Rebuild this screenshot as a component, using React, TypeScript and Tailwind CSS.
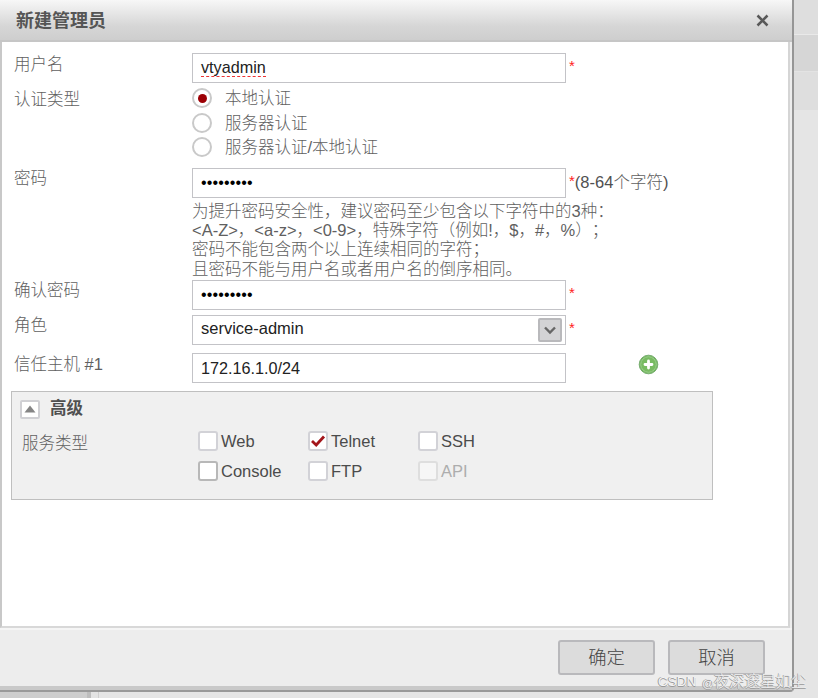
import React from 'react';

interface FieldRowProps {
  label: string;
  className: string;
  labelClassName?: string;
  children: React.ReactNode;
}

function FieldRow({ label, className, labelClassName = '', children }: FieldRowProps) {
  return (
    <div className={`grid grid-cols-[178px_1fr] ${className}`}>
      <div className={`h-[22px] leading-[22px] whitespace-nowrap ${labelClassName}`}>{label}</div>
      <div>{children}</div>
    </div>
  );
}

function TextBox({ children }: { children: React.ReactNode }) {
  return (
    <div className="flex h-[30px] w-[374px] items-center border border-[#c3c3c7] bg-white pl-2 text-[16.2px] text-[#222]">
      {children}
    </div>
  );
}

function Required() {
  return <span className="ml-[3px] h-[26px] text-[15px] leading-[26px] text-[#f22]">*</span>;
}

function Dots() {
  return <span className="text-[16px] tracking-[0.15px] text-black">•••••••••</span>;
}

function RadioOption({ label, checked = false }: { label: string; checked?: boolean }) {
  return (
    <div className="flex h-[24.6px] items-center">
      <span className="flex h-5 w-5 items-center justify-center rounded-full border-2 border-[#c9c9c9] bg-white">
        {checked && <span className="h-[9px] w-[9px] rounded-full bg-[#9c0005]" />}
      </span>
      <span className="ml-[13px]">{label}</span>
    </div>
  );
}

interface CheckOptionProps {
  label: string;
  checked?: boolean;
  disabled?: boolean;
  focused?: boolean;
}

function CheckOption({ label, checked, disabled, focused }: CheckOptionProps) {
  const border = focused ? 'border-[#b8b8b8]' : disabled ? 'border-[#dedede]' : 'border-[#d2d2d7]';
  return (
    <div className="flex h-[30px] w-[110px] items-center">
      <span
        className={`flex h-5 w-5 items-center justify-center rounded-[3px] border-2 ${border} ${disabled ? 'bg-[#f6f6f6]' : 'bg-white'}`}
      >
        {checked && (
          <svg width="16" height="16" viewBox="0 0 16 16" fill="none">
            <path d="M2 8 6.2 12 14 3.5" stroke="#a3161b" strokeWidth="2.8" />
          </svg>
        )}
      </span>
      <span className={`ml-[3px] text-[16.5px] ${disabled ? 'text-[#adadad]' : 'text-[#4b4b4b]'}`}>{label}</span>
    </div>
  );
}

const services: CheckOptionProps[] = [
  { label: 'Web' },
  { label: 'Telnet', checked: true },
  { label: 'SSH' },
  { label: 'Console', focused: true },
  { label: 'FTP' },
  { label: 'API', disabled: true },
];

const hints = [
  '为提升密码安全性，建议密码至少包含以下字符中的3种：',
  '<A-Z>，<a-z>，<0-9>，特殊字符（例如!，$，#，%）；',
  '密码不能包含两个以上连续相同的字符；',
  '且密码不能与用户名或者用户名的倒序相同。',
];

export default function App() {
  return (
    <div className="relative h-[698px] w-[818px] overflow-hidden bg-[#e5e5e5] font-['Liberation_Sans','Noto_Sans_CJK_SC',sans-serif] text-[16.5px] font-light text-[#606060] [text-spacing-trim:space-all]">
      <div className="flex h-[692px]">
        {/* Dialog */}
        <div className="flex w-[794px] shrink-0 flex-col rounded-br-[4px] border-r-2 border-b-2 border-r-[#969696] border-b-[#999] bg-[#ededed]">
          <div className="flex h-[42px] shrink-0 items-center justify-between border-b-2 border-[#c6c6c6] bg-linear-to-b from-[#f7f7f7] from-0% via-[#d6d6d6] via-65% to-[#cecece] pr-[23px] pl-4">
            <h1 className="pt-[2px] text-[18px] font-bold text-[#555]">新建管理员</h1>
            <svg width="13" height="13" viewBox="0 0 13 13">
              <path d="M1.5 1.5 11.5 11.5M11.5 1.5 1.5 11.5" stroke="#595959" strokeWidth="2.5" />
            </svg>
          </div>

          <div className="mr-[2px] flex h-[586px] shrink-0 flex-col border-r-2 border-b-2 border-l-2 border-r-[#d5d5d5] border-b-[#d8d8d8] border-l-[#c8c8c8] bg-white pt-[11px]">
            <div className="pl-3">
              <FieldRow label="用户名" className="h-[33px]">
                <div className="flex">
                  <TextBox>
                    <span className="border-b border-dashed border-[#e33] leading-[17px]">vtyadmin</span>
                  </TextBox>
                  <Required />
                </div>
              </FieldRow>
              <FieldRow label="认证类型" className="h-[82px]" labelClassName="mt-[2px]">
                <RadioOption label="本地认证" checked />
                <RadioOption label="服务器认证" />
                <RadioOption label="服务器认证/本地认证" />
              </FieldRow>
              <FieldRow label="密码" className="h-[112px]" labelClassName="-mt-px">
                <div className="flex">
                  <TextBox>
                    <Dots />
                  </TextBox>
                  <Required />
                  <span className="leading-[29px]">
                    <span className="text-[#505050]">(8-64</span>个字符<span className="text-[#505050]">)</span>
                  </span>
                </div>
                <div className="mt-[4px]">
                  {hints.map((hint) => (
                    <p key={hint} className="h-[19.2px] leading-[19.2px] whitespace-nowrap">
                      {hint}
                    </p>
                  ))}
                </div>
              </FieldRow>
              <FieldRow label="确认密码" className="h-[35px]" labelClassName="-mt-px">
                <div className="flex">
                  <TextBox>
                    <Dots />
                  </TextBox>
                  <Required />
                </div>
              </FieldRow>
              <FieldRow label="角色" className="h-[38px]" labelClassName="-mt-px">
                <div className="flex">
                  <TextBox>
                    <span className="grow pb-[3px] text-[16.5px]">service-admin</span>
                    <span className="mr-[3px] flex h-6 w-6 items-center justify-center rounded-[2px] border-2 border-[#b9b9bc] bg-[#d3d3d5]">
                      <svg width="14" height="10" viewBox="0 0 14 10" fill="none">
                        <path d="M2 2.5 7 7.5 12 2.5" stroke="#666" strokeWidth="2.4" />
                      </svg>
                    </span>
                  </TextBox>
                  <Required />
                </div>
              </FieldRow>
              <FieldRow label="信任主机 #1" className="h-[38px]">
                <div className="flex">
                  <TextBox>172.16.1.0/24</TextBox>
                  <svg className="mt-[1px] ml-[72px]" width="21" height="21" viewBox="0 0 21 21">
                    <circle cx="10.5" cy="10.5" r="9.3" fill="#6cb557" stroke="#78ad70" strokeWidth="1" />
                    <circle cx="10.5" cy="10.5" r="7.8" fill="#78bb62" stroke="#9dce8e" strokeWidth="1" />
                    <path d="M10.5 7v7M7 10.5h7" stroke="#fff" strokeWidth="2.8" strokeLinecap="round" />
                  </svg>
                </div>
              </FieldRow>
            </div>

            {/* Advanced */}
            <div className="ml-[9px] h-[109px] w-[702px] border border-[#bfbfbf] bg-[#f0f0f0] pt-[7px] pl-2">
              <div className="flex h-5 items-center">
                <span className="flex h-[19px] w-[20px] items-center justify-center rounded-[2px] border-2 border-[#d0d0d4] bg-white">
                  <svg width="12" height="8" viewBox="0 0 12 8">
                    <path d="M6 0.5 11.5 7.5H0.5Z" fill="#858585" />
                  </svg>
                </span>
                <span className="ml-[10px] pb-px font-bold text-[#505050]">高级</span>
              </div>
              <div className="mt-[7px] flex pl-[2px]">
                <div className="w-[176px] leading-[35px]">服务类型</div>
                <div className="flex w-[330px] flex-wrap">
                  {services.map((service) => (
                    <CheckOption key={service.label} {...service} />
                  ))}
                </div>
              </div>
            </div>
          </div>

          {/* Footer */}
          <div className="flex grow items-start justify-end gap-[13px] border-t-2 border-b-4 border-t-[#f5f5f5] border-b-[#c9c9c9] pt-[10px] pr-[27px]">
            {['确定', '取消'].map((text) => (
              <button
                key={text}
                className="h-[35px] w-[97px] rounded-[3px] border-2 border-[#b9b9bc] bg-[#dcdcdc] pt-px text-[18.3px] leading-[30px] text-[#444]"
              >
                {text}
              </button>
            ))}
          </div>
        </div>

        {/* Page behind the dialog */}
        <div className="grow">
          <div className="h-[35px] border-b border-[#e9e9e9] bg-[#dedede]" />
          <div className="h-[37px] border-b border-[#e3e3e3] bg-[#d6d6d6]" />
          <div className="h-[38px] bg-[#dedede]" />
        </div>
      </div>
      <div className="flex h-[6px]">
        <div className="w-[91px] border-r-4 border-[#bdbdbd] bg-[#cdcdcd]" />
        <div className="w-[8px] border-r border-[#cfcfcf] bg-[#e3e3e3]" />
      </div>

      {/* Watermark */}
      <div className="absolute top-[672px] left-[658px] flex gap-[6px] leading-5 whitespace-nowrap text-[#f4f4f4] [text-shadow:-1px_0_0_#999,0_1px_0_#999]">
        <span className="text-[13.5px]">CSDN</span>
        <span className="text-[15.4px]">
          <span className="text-[11.5px]">@</span>夜深邃星如尘
        </span>
      </div>
    </div>
  );
}
